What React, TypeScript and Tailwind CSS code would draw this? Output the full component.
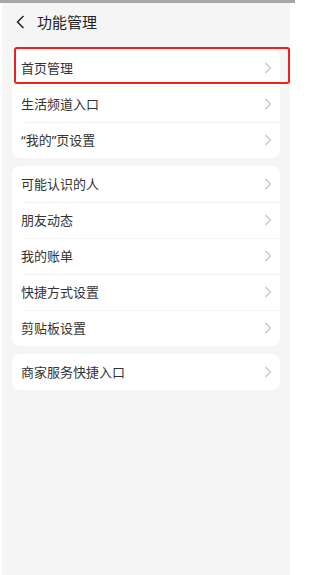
import type { ReactNode } from "react";

const q = (s: string) => <span style={{ fontFamily: '"Noto Sans", sans-serif' }}>{s}</span>;

const groups: { key: string; label: ReactNode }[][] = [
  [
    { key: "home", label: "首页管理" },
    { key: "life", label: "生活频道入口" },
    {
      key: "mine",
      label: (
        <>
          {q("“")}我的{q("”")}页设置
        </>
      ),
    },
  ],
  [
    { key: "people", label: "可能认识的人" },
    { key: "moments", label: "朋友动态" },
    { key: "bill", label: "我的账单" },
    { key: "shortcut", label: "快捷方式设置" },
    { key: "clipboard", label: "剪贴板设置" },
  ],
  [{ key: "merchant", label: "商家服务快捷入口" }],
];

const Chevron = () => (
  <svg width="8" height="12" viewBox="0 0 8 12" fill="none">
    <polyline points="1.5,1 6.5,6 1.5,11" stroke="#c4c4c4" strokeWidth="1.1" />
  </svg>
);

export default function App() {
  return (
    <div
      className="w-[295px] h-[575px] bg-white flex flex-col overflow-hidden"
      style={{ fontFamily: '"Noto Sans CJK SC", "Noto Sans", sans-serif' }}
    >
      <div className="h-[3px] bg-[#a6a6a6]" />
      <div className="flex flex-1">
        <div className="w-[2px]" />
        <div className="relative w-[288px] bg-[#f5f5f5] flex flex-col">
          <div className="h-[38px] flex items-center pl-[13px]">
            <svg width="12" height="14" viewBox="0 0 12 14" fill="none">
              <polyline points="8.5,1 2.5,7 8.5,13" stroke="#222" strokeWidth="1.5" />
            </svg>
            <span className="ml-[10px] text-[15px] text-[#222]">功能管理</span>
          </div>
          <div className="flex flex-col gap-[8px] px-[10px] pt-[9px]">
            {groups.map((items, gi) => (
              <div key={gi} className="bg-white rounded-[8px] flex flex-col">
                {items.map((item, i) => (
                  <div key={item.key} className="relative h-[36px] flex items-center justify-between pl-[9px] pr-[8px]">
                    {i > 0 && <div className="absolute left-[10px] right-0 top-0 h-px bg-[#f3f3f3]" />}
                    <span className="text-[13px] text-[#333]">{item.label}</span>
                    <Chevron />
                  </div>
                ))}
              </div>
            ))}
          </div>
          <div className="absolute left-[12px] top-[44px] w-[276px] h-[37px] border-2 border-[#f02020] rounded-[3px]" />
        </div>
      </div>
    </div>
  );
}
